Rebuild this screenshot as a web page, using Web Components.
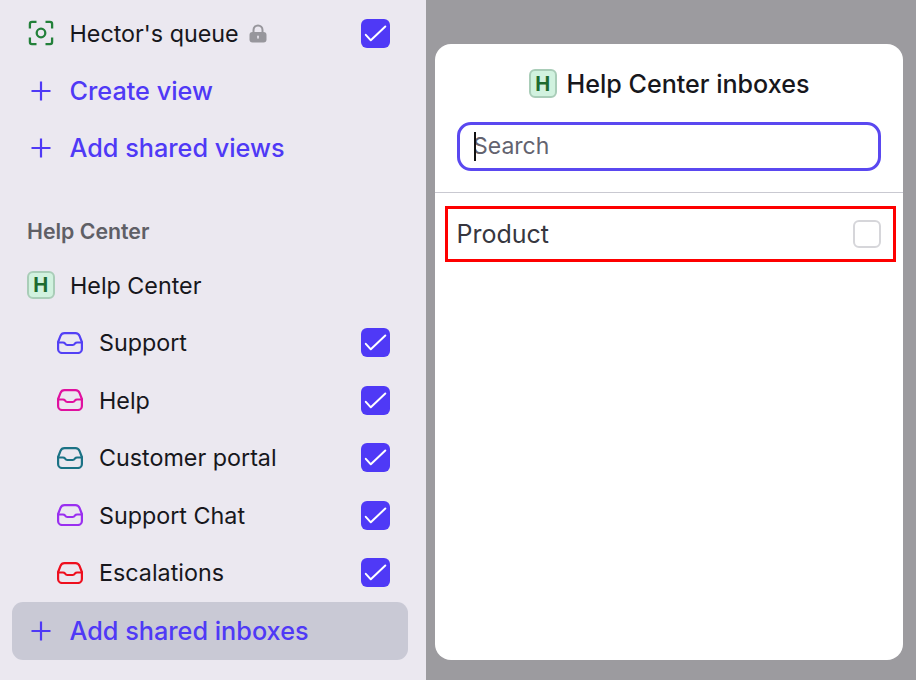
<!DOCTYPE html>
<html>
<head>
<meta charset="utf-8">
<style>
  html,body{margin:0;padding:0;height:100%;overflow:hidden;}
  body{font-family:Inter,"Liberation Sans",sans-serif;color:#17171c;}
</style>
</head>
<body>
<app-shell>
  <side-bar slot="side">
    <nav-row label="Hector's queue" checked locked><svg slot="icon" width="28" height="28" viewBox="0 0 28 28" fill="none" stroke="#23803a" stroke-width="2.3"><path d="M2.900 9.500V5a2.100 2.100 0 0 1 2.100-2.100h4.500M18.500 2.900H23A2.100 2.100 0 0 1 25.100 5v4.500M25.100 18.500V23a2.100 2.100 0 0 1-2.100 2.100h-4.500M9.500 25.100H5A2.100 2.100 0 0 1 2.900 23v-4.500"/><circle cx="14" cy="14" r="4.300"/></svg></nav-row>
    <add-row>Create view</add-row>
    <add-row>Add shared views</add-row>
    <section-title>Help Center</section-title>
    <nav-row label="Help Center"><letter-badge slot="icon"></letter-badge></nav-row>
    <nav-row label="Support" nested checked><inbox-icon slot="icon" color="#5340f5"></inbox-icon></nav-row>
    <nav-row label="Help" nested checked><inbox-icon slot="icon" color="#e0109f"></inbox-icon></nav-row>
    <nav-row label="Customer portal" nested checked><inbox-icon slot="icon" color="#1b7285"></inbox-icon></nav-row>
    <nav-row label="Support Chat" nested checked><inbox-icon slot="icon" color="#9a2ff0"></inbox-icon></nav-row>
    <nav-row label="Escalations" nested checked><inbox-icon slot="icon" color="#ee0f1e"></inbox-icon></nav-row>
    <add-row active>Add shared inboxes</add-row>
  </side-bar>
  <inbox-modal slot="modal"></inbox-modal>
</app-shell>

<script>
function shadow(el, html) {
  el.attachShadow({ mode: 'open' }).innerHTML = html;
}

class AppShell extends HTMLElement {
  constructor() {
    super();
    shadow(this, `
    <style>
      :host{display:flex;width:916px;height:680px;overflow:hidden;background:#9c9b9f;}
      .left{flex:0 0 426px;height:680px;}
      .right{flex:1;padding:44px 13px 20px 9px;box-sizing:border-box;height:680px;display:flex;}
    </style>
    <div class="left"><slot name="side"></slot></div>
    <div class="right"><slot name="modal"></slot></div>`);
  }
}

class SideBar extends HTMLElement {
  constructor() {
    super();
    shadow(this, `
    <style>
      :host{display:block;height:680px;box-sizing:border-box;background:#ebe8f0;padding:4.3px 18px 0 12px;}
    </style>
    <slot></slot>`);
  }
}

class CheckBox extends HTMLElement {
  constructor() {
    super();
    shadow(this, `
    <style>
      :host{display:flex;align-items:center;justify-content:center;width:29px;height:29px;box-sizing:border-box;border-radius:6px;}
      :host([checked]){background:#4f39f6;}
      :host(:not([checked])){border:2px solid #d6d6da;background:#fff;}
      svg{display:none;}
      :host([checked]) svg{display:block;}
    </style>
    <svg width="29" height="29" viewBox="0 0 29 29" fill="none" stroke="#fff" stroke-width="2" stroke-linecap="round" stroke-linejoin="round"><path d="M4.800 15.800l5 5.500L24.300 7.500"/></svg>`);
  }
}

class NavRow extends HTMLElement {
  constructor() {
    super();
    const nested = this.hasAttribute('nested');
    const lock = this.hasAttribute('locked') ? `<svg class="lock" width="18" height="19" viewBox="0 0 18 19"><path d="M4.500 9V6a4.500 4.500 0 0 1 9 0v3" fill="none" stroke="#97969c" stroke-width="2"/><rect x="0.500" y="8" width="17" height="10.500" rx="3" fill="#97969c"/><rect x="8.200" y="11.500" width="1.600" height="3.200" rx=".8" fill="#ebe8f0"/></svg>` : '';
    const box = this.hasAttribute('checked') ? '<check-box checked></check-box>' : '';
    shadow(this, `
    <style>
      :host{display:flex;align-items:center;height:57.5px;padding:0 18px 0 ${nested ? 43 : 14.5}px;box-sizing:border-box;font-size:23.300px;color:#17171c;}
      .icon{flex:0 0 ${nested ? 29 : 28}px;display:flex;align-items:center;justify-content:center;margin-right:${nested ? 15 : 15}px;}
      .label{flex:0 0 auto;white-space:nowrap;}
      .lock{margin-left:10px;}
      check-box{margin-left:auto;}
    </style>
    <span class="icon"><slot name="icon"></slot></span>
    <span class="label">${this.getAttribute('label')}</span>${lock}${box}`);
  }
}

class AddRow extends HTMLElement {
  constructor() {
    super();
    shadow(this, `
    <style>
      :host{display:flex;align-items:center;height:57.5px;padding-left:14.5px;box-sizing:border-box;font-size:25.250px;font-weight:500;color:#4f39f6;border-radius:11px;}
      :host([active]){background:#c9c9d5;margin-top:.5px;height:58px;}
      svg{flex:none;margin-right:15px;}
    </style>
    <svg width="28" height="28" viewBox="0 0 28 28" fill="none" stroke="#4f39f6" stroke-width="2.200"><path d="M14 4.500v19M4.500 14h19"/></svg>
    <slot></slot>`);
  }
}

class SectionTitle extends HTMLElement {
  constructor() {
    super();
    shadow(this, `
    <style>
      :host{display:flex;align-items:flex-end;height:79.5px;padding:0 0 12.500px 15px;box-sizing:border-box;font-size:21.300px;font-weight:600;color:#5f5f66;}
    </style>
    <slot></slot>`);
  }
}

class LetterBadge extends HTMLElement {
  constructor() {
    super();
    shadow(this, `
    <style>
      :host{display:flex;flex:none;align-items:center;justify-content:center;width:28.500px;height:28.500px;box-sizing:border-box;border:2px solid #a9cdb8;border-radius:6px;background:#d1f2df;color:#1d6b2f;font-size:20px;font-weight:700;line-height:1;}
    </style>
    <span>H</span>`);
  }
}

class InboxIcon extends HTMLElement {
  constructor() {
    super();
    const c = this.getAttribute('color');
    shadow(this, `
    <style>:host{display:block;width:26px;height:22px;}svg{display:block;}</style>
    <svg width="26" height="22" viewBox="0 0 26 22" fill="none" stroke="${c}" stroke-width="2.200" stroke-linejoin="round" stroke-linecap="round"><path d="M7.500 1.100h11c2 0 3.300 1 4 2.800L24.900 10v7a4 4 0 0 1-4 4H5.100a4 4 0 0 1-4-4v-7L3.500 3.900c.7-1.800 2-2.800 4-2.800z"/><path d="M1.100 10.500H6c1 0 1.500.4 2 1 .6.900 1.300 1.500 2.300 1.500h5.400c1 0 1.700-.6 2.300-1.500.5-.6 1-1 2-1h4.900"/></svg>`);
  }
}

class SearchBox extends HTMLElement {
  constructor() {
    super();
    shadow(this, `
    <style>
      :host{display:flex;align-items:center;height:49px;box-sizing:border-box;border:3px solid #5a48f0;border-radius:14px;padding-left:13.500px;font-size:23px;color:#63636f;background:#fff;}
      .caret{flex:none;width:2px;height:28.500px;background:#111;margin-right:-2.500px;position:relative;}
      .text{margin-top:-2px;}
    </style>
    <span class="caret"></span><span class="text">Search</span>`);
  }
}

class ListOption extends HTMLElement {
  constructor() {
    super();
    shadow(this, `
    <style>
      :host{display:flex;align-items:center;justify-content:space-between;height:56px;box-sizing:border-box;border:3px solid #fe0000;padding:0 12px 0 8.500px;font-size:25px;color:#37373f;}
      check-box{width:28px;height:28px;}
    </style>
    <slot></slot><check-box></check-box>`);
  }
}

class InboxModal extends HTMLElement {
  constructor() {
    super();
    shadow(this, `
    <style>
      :host{display:block;width:468px;height:616px;background:#fff;border-radius:16px;}
      header{display:flex;align-items:center;justify-content:center;gap:9.500px;height:78px;padding-top:1px;box-sizing:border-box;font-size:25.100px;font-weight:500;color:#17171c;}
      .search{padding:0 22px 21px;border-bottom:1px solid #c9c9d1;}
      .list{padding:13px 7px 0 10px;}
    </style>
    <header><letter-badge></letter-badge><span>Help Center inboxes</span></header>
    <div class="search"><search-box></search-box></div>
    <div class="list"><list-option>Product</list-option></div>`);
  }
}

customElements.define('check-box', CheckBox);
customElements.define('letter-badge', LetterBadge);
customElements.define('inbox-icon', InboxIcon);
customElements.define('nav-row', NavRow);
customElements.define('add-row', AddRow);
customElements.define('section-title', SectionTitle);
customElements.define('search-box', SearchBox);
customElements.define('list-option', ListOption);
customElements.define('inbox-modal', InboxModal);
customElements.define('side-bar', SideBar);
customElements.define('app-shell', AppShell);
</script>
</body>
</html>
